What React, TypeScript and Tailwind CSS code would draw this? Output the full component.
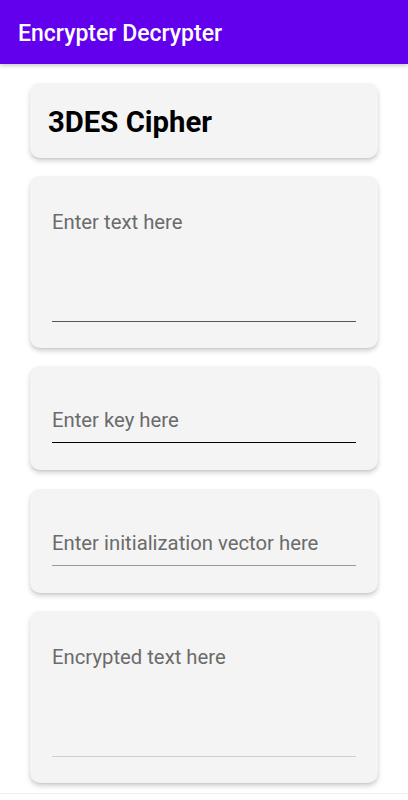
import React from "react";

function Card({ children, className = "" }: { children: React.ReactNode; className?: string }) {
  return (
    <div
      className={`mx-[30px] rounded-[10px] bg-[#f4f4f4] shadow-[0_3px_5px_rgba(0,0,0,0.18),0_1px_2px_rgba(0,0,0,0.06)] ${className}`}
    >
      {children}
    </div>
  );
}

function Field({ label, tall, lineColor }: { label: string; tall?: boolean; lineColor: string }) {
  return (
    <div className={`mx-[22px] flex flex-col ${tall ? "h-[146px] pt-[33px]" : "h-[77px] pt-[41px]"}`}>
      <div className="text-[20.3px] leading-[26px] text-[#6b6b6b]">{label}</div>
      <div className="flex-1" />
      <div className={`h-px w-full ${lineColor}`} />
    </div>
  );
}

export default function App() {
  return (
    <div className="relative h-[800px] w-[408px] overflow-hidden bg-white" style={{ fontFamily: "Roboto, 'Noto Sans', sans-serif" }}>
      <div className="flex h-[64px] items-center bg-[#6200ee] pl-[18px] pt-[2px] shadow-[0_2px_4px_rgba(0,0,0,0.2)]">
        <span className="text-[23px] font-medium leading-none text-white">Encrypter Decrypter</span>
      </div>
      <div className="flex h-[729px] flex-col gap-[18px] overflow-hidden pt-[19px]">
        <Card className="flex h-[75px] items-center pl-[18px] pt-[4px]">
          <span className="text-[29.3px] font-bold leading-none text-black">3DES Cipher</span>
        </Card>
        <Card className="h-[172px]">
          <Field label="Enter text here" tall lineColor="bg-[#555555]" />
        </Card>
        <Card className="h-[104px]">
          <Field label="Enter key here" lineColor="bg-black" />
        </Card>
        <Card className="mt-px h-[104px]">
          <Field label="Enter initialization vector here" lineColor="bg-[#9a9a9a]" />
        </Card>
        <Card className="h-[172px]">
          <Field label="Encrypted text here" tall lineColor="bg-[#cfcfcf]" />
        </Card>
      </div>
      <div className="h-px bg-[#f0f0f0]" />
    </div>
  );
}
